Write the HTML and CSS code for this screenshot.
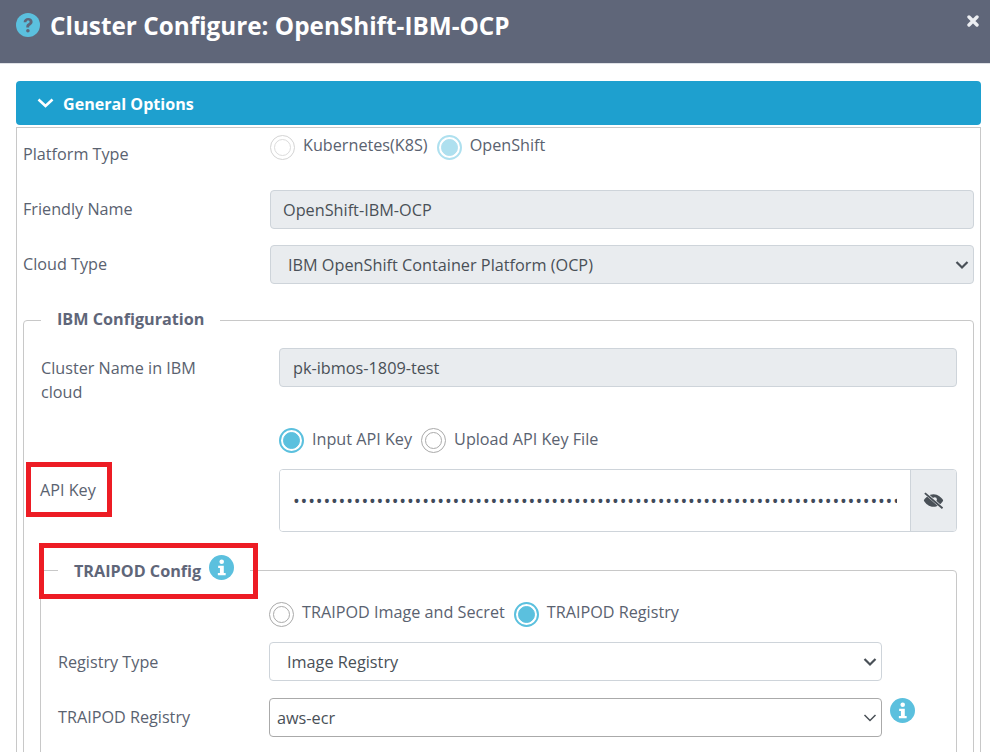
FILE: index.html
```html
<!DOCTYPE html>
<html lang="en">
<head>
<meta charset="utf-8">
<title>Cluster Configure</title>
<link rel="stylesheet" href="styles.css">
</head>
<body>
<header class="modal-head">
  <svg class="q-icon" viewBox="0 0 24 24" aria-hidden="true"><circle cx="12" cy="12" r="12" fill="#5bc0de"/><path d="M7.600 9.200C7.700 6.700 9.600 5 12.200 5c2.600 0 4.400 1.600 4.400 3.800 0 1.700-.9 2.600-2.100 3.400-1 .7-1.300 1-1.300 1.900v.4h-2.900v-.7c0-1.600.6-2.400 1.800-3.200 1-.7 1.500-1.100 1.500-1.800 0-.8-.6-1.300-1.500-1.300-1 0-1.600.6-1.700 1.700z" fill="#5f6679"/><circle cx="11.900" cy="17.700" r="1.800" fill="#5f6679"/></svg>
  <h1 class="modal-title">Cluster Configure: OpenShift-IBM-OCP</h1>
  <svg class="close" viewBox="0 0 12 12" aria-hidden="true"><path d="M2 2l8 8M10 2l-8 8" stroke="#eceef2" stroke-width="3.400" stroke-linecap="round"/></svg>
</header>
<main class="modal-body">
  <div class="panel-head">
    <svg class="chev" viewBox="0 0 17 10" aria-hidden="true"><path d="M1.500 1.500l7 6.500 7-6.500" fill="none" stroke="#fff" stroke-width="2.600"/></svg>
    <span>General Options</span>
  </div>
  <section class="panel-box">
    <div class="row row-platform">
      <label class="lab lab-platform">Platform Type</label>
      <div class="radios">
        <span class="radio off dim"></span><span class="rtext">Kubernetes(K8S)</span>
        <span class="radio on dim"></span><span class="rtext">OpenShift</span>
      </div>
    </div>
    <div class="row row-friendly">
      <label class="lab">Friendly Name</label>
      <input class="ctl ro" value="OpenShift-IBM-OCP" readonly>
    </div>
    <div class="row row-cloud">
      <label class="lab">Cloud Type</label>
      <select class="ctl ro sel" disabled><option>IBM OpenShift Container Platform (OCP)</option></select>
    </div>
    <fieldset class="fs fs-ibm">
      <legend class="lg">IBM Configuration</legend>
      <div class="row2 row-cluster">
        <label class="lab lab-cluster">Cluster Name in IBM cloud</label>
        <input class="ctl ro" value="pk-ibmos-1809-test" readonly>
      </div>
      <div class="row2 row-apiradio">
        <span></span>
        <div class="radios">
          <span class="radio on"></span><span class="rtext">Input API Key</span>
          <span class="radio off"></span><span class="rtext">Upload API Key File</span>
        </div>
      </div>
      <div class="row2 row-api">
        <label class="lab lab-api">API Key</label>
        <div class="group">
          <input class="pw" type="password" value="•••••••••••••••••••••••••••••••••••••••••••••••••••••••••••••••••••••••••••••••••••••••••••••••••••••" readonly>
          <span class="addon">
            <svg class="eye" viewBox="0 0 20 16" aria-hidden="true"><path d="M10 2C5.800 2 2.300 5 .8 8c1.500 3 5 6 9.200 6s7.700-3 9.200-6C17.700 5 14.200 2 10 2z" fill="#495057"/><circle cx="11.200" cy="7" r="2" fill="#e9ecef"/><path d="M2 .8l16.500 14.400" stroke="#e9ecef" stroke-width="2.800"/><path d="M1.800 1l16.800 14.300" stroke="#495057" stroke-width="1.800"/></svg>
          </span>
        </div>
      </div>
      <fieldset class="fs fs-traipod">
        <legend class="lg lg-t">TRAIPOD Config <svg class="info info-lg" viewBox="0 0 24 24" aria-hidden="true"><circle cx="12" cy="12" r="12" fill="#5bc0de"/><circle cx="12.200" cy="6.500" r="2.200" fill="#fff"/><path d="M8.800 10.200h5.400v7h1.800v2.300H8.500v-2.300h2v-4.700H8.800z" fill="#fff"/></svg></legend>
        <div class="row3 row-tradio">
          <span></span>
          <div class="radios">
            <span class="radio off"></span><span class="rtext">TRAIPOD Image and Secret</span>
            <span class="radio on"></span><span class="rtext">TRAIPOD Registry</span>
          </div>
        </div>
        <div class="row3 row-regtype">
          <label class="lab">Registry Type</label>
          <select class="ctl sel wht"><option>Image Registry</option></select>
        </div>
        <div class="row3 row-reg">
          <label class="lab">TRAIPOD Registry</label>
          <select class="ctl sel wht dark"><option>aws-ecr</option></select>
          <svg class="info" viewBox="0 0 24 24" aria-hidden="true"><circle cx="12" cy="12" r="12" fill="#5bc0de"/><circle cx="12.200" cy="6.500" r="2.200" fill="#fff"/><path d="M8.800 10.200h5.400v7h1.800v2.300H8.500v-2.300h2v-4.700H8.800z" fill="#fff"/></svg>
        </div>
      </fieldset>
    </fieldset>
  </section>
</main>
<div class="mark mark-api"></div>
<div class="mark mark-traipod"></div>
</body>
</html>
```
FILE: styles.css
```css
* { box-sizing: border-box; }
html, body { height: 752px; overflow: hidden; }
body { margin: 0; background: #fff; font-family: "Open Sans", sans-serif; font-size: 16.2px; color: #5a6270; position: relative; }

.modal-head { height: 64px; background: #5f6679; border-bottom: 1px solid #dfe1e6; display: flex; align-items: flex-start; padding: 13px 11px 0 16px; }
.q-icon { width: 24px; height: 24px; margin-right: 10px; flex: none; }
.modal-title { margin: 0; font-size: 24.3px; line-height: 26px; font-weight: 700; color: #fff; flex: 1; }
.close { width: 12px; height: 12px; margin-top: 2px; flex: none; }

.modal-body { padding: 17px 9px 0 16px; }
.panel-head { height: 44px; background: #1ea0cf; border-radius: 4px; color: #fff; font-weight: 700; font-size: 16.1px; display: flex; align-items: center; padding: 2px 0 0 21px; gap: 9px; }
.chev { width: 17px; height: 10px; flex: none; margin-top: -2px; }
.panel-box { margin-top: 2px; border: 1px solid #c8c8c8; padding: 0 6px; height: 640px; width: 965px; }

.row { display: grid; grid-template-columns: 247px 704px; align-items: center; }
.row-platform { height: 62px; align-items: start; }
.lab-platform { margin-top: 14px; }
.row-platform .radios { margin-top: 7px; }
.row-platform .rtext, .row-tradio .rtext { margin-top: -5px; }
.row-friendly, .row-cloud { height: 39px; }
.row-friendly .lab, .row-cloud .lab { margin-top: -2px; }
.row-friendly .ctl { padding-left: 12px; }
.row-cloud { margin-top: 16px; }
.lab { line-height: 24px; }

.radios { display: flex; align-items: center; }
.radio { width: 25px; height: 25px; border-radius: 50%; border: 1px solid #aaa; display: flex; align-items: center; justify-content: center; flex: none; }
.radio::after { content: ""; width: 15px; height: 15px; border-radius: 50%; border: 1px solid #aaa; }
.radio.on { border: 2px solid #5bc0de; }
.radio.on::after { background: #5bc0de; border-color: #5bc0de; }
.radio.off.dim { border-color: #d4d4d4; }
.radio.off.dim::after { border-color: #dcdcdc; }
.radio.on.dim { border-color: #aee0ef; }
.radio.on.dim::after { background: #aee0ef; border-color: #aee0ef; }
.rtext { margin: -3px 9px 0 8px; line-height: 24px; }

.ctl { height: 39px; width: 100%; border: 1px solid #ced4da; border-radius: 4px; font-family: inherit; font-size: 16.25px; color: #495057; padding: 0 13px; background-color: #fff; }
.ro { background-color: #e9ecef; }
.sel { appearance: none; padding: 0 17px; opacity: 1; background-repeat: no-repeat; background-position: right 4px center; background-size: 14px 10px; background-image: url("data:image/svg+xml,%3Csvg xmlns='http://www.w3.org/2000/svg' viewBox='0 0 14 10'%3E%3Cpath d='M1.500 2l5.500 5.500L12.500 2' fill='none' stroke='%23495057' stroke-width='2.200'/%3E%3C/svg%3E"); }
.dark { border-color: #aaa; padding: 0 7px; background-image: url("data:image/svg+xml,%3Csvg xmlns='http://www.w3.org/2000/svg' viewBox='0 0 14 10'%3E%3Cpath d='M1.500 2l5.500 5.500L12.500 2' fill='none' stroke='%23495057' stroke-width='1.500'/%3E%3C/svg%3E"); }

.fs { margin: 0; min-width: 0; border: 1px solid #c8c8c8; border-radius: 4px; }
.fs-ibm { margin-top: 25px; padding: 17px 16px 0; height: 600px; width: 951px; }
.lg { font-weight: 700; font-size: 16.2px; padding: 0 16px; margin-left: 1px; line-height: 20px; height: 22px; color: #5f6679; }

.row2 { display: grid; grid-template-columns: 239px 678px; }
.row-cluster { height: 39px; }
.lab-cluster { margin-top: 8px; margin-left: 1px; max-width: 190px; }
.row-apiradio { margin-top: 41px; height: 25px; }
.row-api { margin-top: 16px; height: 63px; align-items: start; }
.lab-api { margin-top: 9px; }
.group { display: flex; height: 63px; border: 1px solid #ced4da; border-radius: 4px; overflow: hidden; }
.pw { flex: 1; min-width: 0; border: 0; outline: 0; padding: 0 13px; font-family: inherit; font-size: 18px; letter-spacing: .83px; color: #3f4a5a; background: #fff; }
.addon { width: 46px; background: #e9ecef; border-left: 1px solid #ced4da; display: flex; align-items: center; justify-content: center; flex: none; }
.eye { width: 21px; height: 17px; }

.fs-traipod { margin-top: 27px; padding: 21px 16px 0; height: 300px; width: 917px; }
.lg-t { display: flex; align-items: center; padding-top: 2px; line-height: 22px; }
.info { width: 25px; height: 25px; }
.info-lg { margin: -8px 0 0 8px; flex: none; }

.row3 { display: grid; grid-template-columns: 212px 613px; align-items: center; }
.row3 .lab { margin-left: 1px; margin-top: -1px; }
.row-tradio { height: 25px; }
.row-regtype { margin-top: 15px; height: 39px; }
.row3.row-regtype .lab { margin-top: 0; }
.row-reg { margin-top: 17px; height: 39px; grid-template-columns: 212px 613px 33px; }
.row-reg .info { justify-self: end; margin-top: -14px; }

.mark { position: absolute; border: 5px solid #ed1c24; background: transparent; }
.mark-api { left: 26px; top: 462px; width: 86px; height: 55px; }
.mark-traipod { left: 39px; top: 543px; width: 219px; height: 56px; }
```
